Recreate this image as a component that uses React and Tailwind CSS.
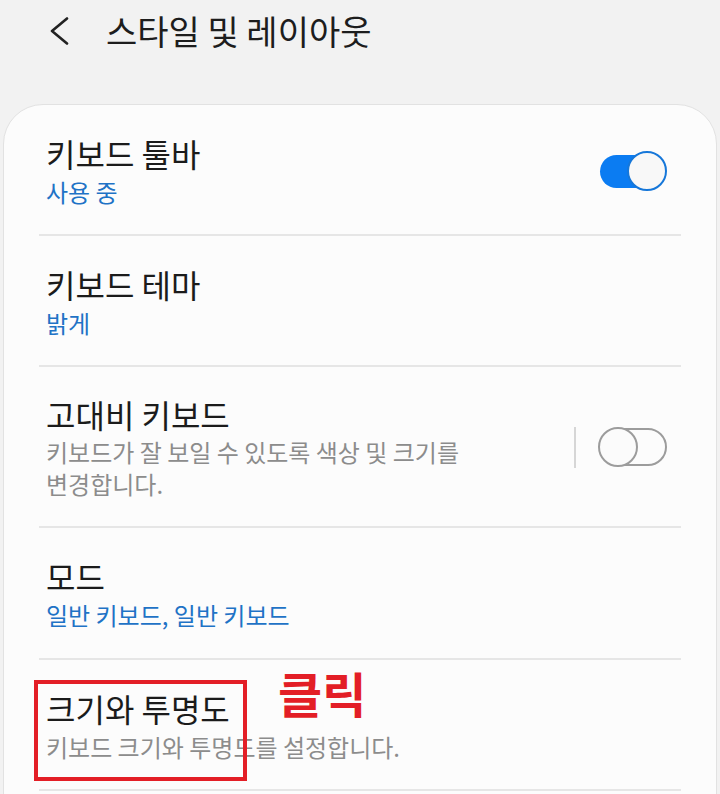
import React from 'react'

const font = { fontFamily: '"Noto Sans CJK KR", "Noto Sans", sans-serif' }

function ToggleOn() {
  return (
    <div className="relative h-[40px] w-[68px] shrink-0">
      <div className="absolute left-[1px] top-[4px] h-[33px] w-[52px] rounded-full bg-[#0b7cf2]" />
      <div className="absolute right-0 top-0 h-[40px] w-[40px] rounded-full border-2 border-[#1677d9] bg-[#f8f8f8]" />
    </div>
  )
}

function ToggleOff() {
  return (
    <div className="relative h-[40px] w-[69px] shrink-0">
      <div className="absolute right-0 top-[1px] h-[38px] w-[60px] rounded-full border-2 border-[#9c9c9c]" />
      <div className="absolute left-0 top-0 h-[40px] w-[40px] rounded-full border-2 border-[#9c9c9c] bg-[#fbfbfb]" />
    </div>
  )
}

function Row({ title, sub, blue, right, tall, pb = 'pb-[26px]' }) {
  return (
    <div
      className={
        'mx-[35px] flex items-center border-b-2 border-[#e6e6e6] pl-[7px] pr-[14px] ' +
        (tall ? 'pt-[27px] ' : 'pt-[28px] ') + pb
      }
    >
      <div className="flex-1">
        <div className="text-[32px] leading-[40px] text-[#1b1b1b]">{title}</div>
        <div className={(tall ? 'mt-[2px] ' : 'mt-[3px] ') + 'text-[24px] leading-[32px] ' + (blue ? 'text-[#1f73c6]' : 'text-[#8c8c8c]')}>{sub}</div>
      </div>
      {right}
    </div>
  )
}

export default function App() {
  return (
    <div className="relative h-[794px] w-[720px] overflow-hidden bg-[#f2f2f2]" style={font}>
      <div className="flex h-[62px] items-center pl-[48px]">
        <svg width="22" height="28" viewBox="0 0 22 28" className="mr-[36px]">
          <path d="M19 1.5 L4 14 L19 26.5" fill="none" stroke="#222" strokeWidth="2.6" strokeLinecap="round" strokeLinejoin="round" />
        </svg>
        <span className="text-[34px] leading-[40px] text-[#1d1d1d]">스타일 및 레이아웃</span>
      </div>
      <div className="mx-[3px] mt-[42px] h-[720px] rounded-t-[40px] border border-[#e2e2e2] bg-[#fcfcfc]">
        <Row title="키보드 툴바" sub="사용 중" blue right={<ToggleOn />} />
        <Row title="키보드 테마" sub="밝게" blue />
        <Row
          tall
          title="고대비 키보드"
          sub={<>키보드가 잘 보일 수 있도록 색상 및 크기를<br />변경합니다.</>}
          right={
            <div className="flex items-center">
              <div className="mr-[22px] h-[41px] w-[2px] bg-[#d6d6d6]" />
              <ToggleOff />
            </div>
          }
        />
        <Row title="모드" sub="일반 키보드, 일반 키보드" blue pb="pb-[27px]" />
        <Row title="크기와 투명도" sub="키보드 크기와 투명도를 설정합니다." />
      </div>
      <div className="absolute left-[34px] top-[680px] h-[101px] w-[213px] border-[4px] border-[#e31e26]" />
      <div className="absolute left-[278px] top-[660px] text-[48px] font-bold leading-[64px] text-[#e31e26]">클릭</div>
    </div>
  )
}
